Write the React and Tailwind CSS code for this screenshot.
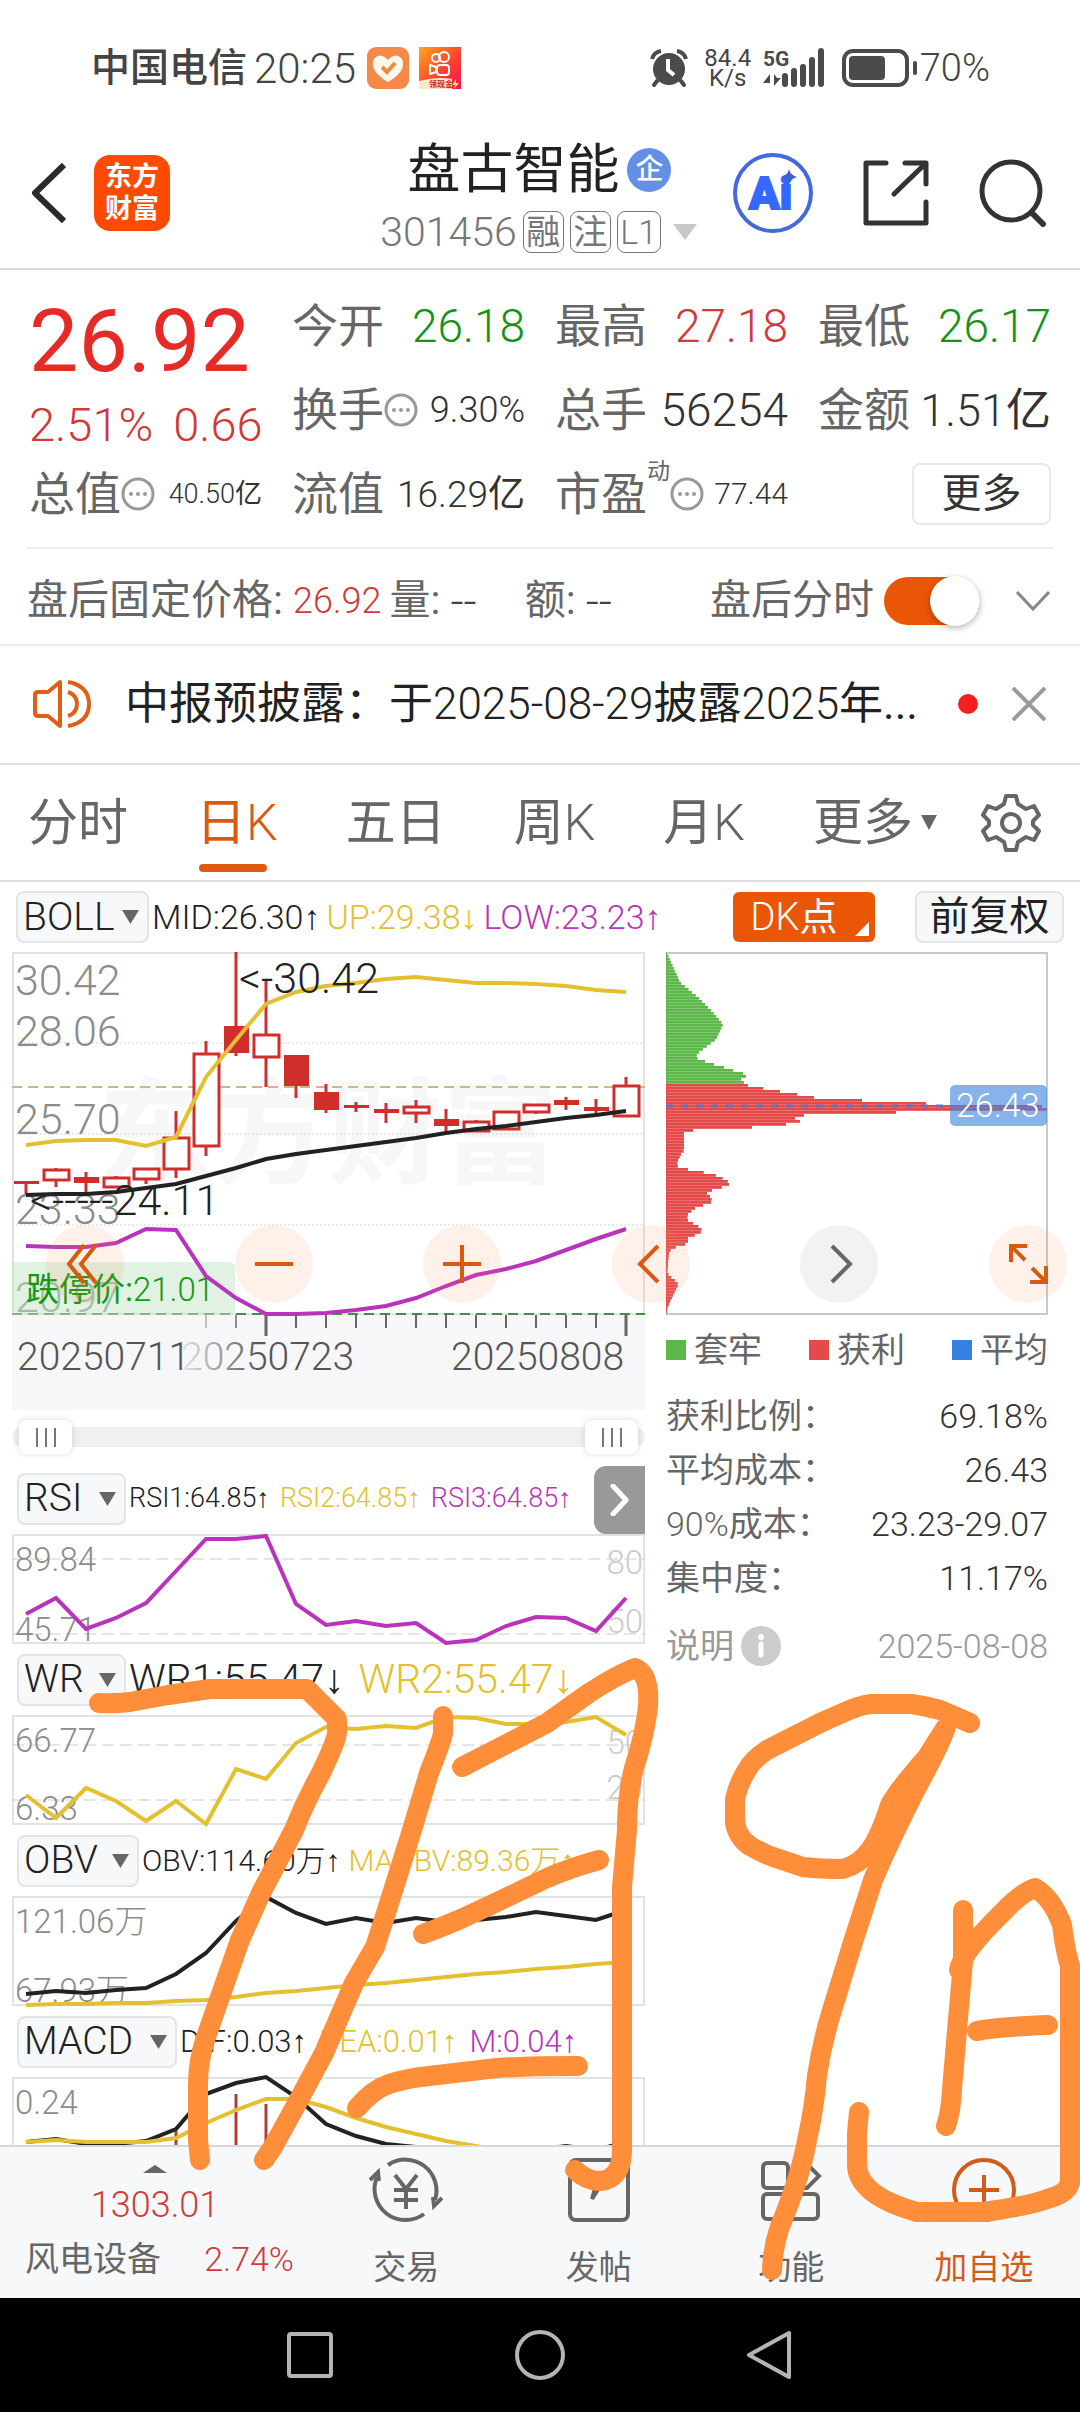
// App.jsx
import { useState } from 'react';

const STEP = 30;
const START = 14;
const UP = '#cf2e2c';
const GOLD = '#e3c02f';
const PURPLE = '#b933bb';
const INK = '#222222';

// high, top, bottom, low, filled
const CANDLES = [
  [229, 229, 232, 242, true],
  [216, 218, 228, 235, false],
  [220, 225, 231, 240, true],
  [224, 226, 235, 235, false],
  [216, 217, 227, 232, false],
  [159, 186, 217, 226, false],
  [89, 102, 194, 204, false],
  [0, 74, 101, 104, true],
  [27, 83, 105, 135, false],
  [103, 103, 134, 146, true],
  [132, 140, 158, 161, true],
  [150, 153, 156, 160, true],
  [151, 157, 161, 171, true],
  [148, 155, 161, 171, false],
  [157, 167, 174, 181, true],
  [168, 170, 179, 179, false],
  [160, 160, 177, 177, false],
  [152, 153, 160, 162, false],
  [145, 148, 153, 158, true],
  [147, 155, 159, 162, true],
  [125, 134, 164, 164, false],
];

const BOLL_UP = [193, 189, 188, 188, 194, 185, 125, 88, 52, 40, 34, 31, 27, 25, 28, 31, 31, 32, 34, 38, 40];
const BOLL_MID = [243, 242, 242, 240, 236, 232, 224, 216, 207, 202, 198, 194, 190, 186, 181, 177, 174, 170, 166, 163, 159];
const BOLL_LOW = [294, 295, 295, 291, 277, 278, 324, 346, 362, 362, 361, 358, 354, 346, 334, 323, 317, 309, 298, 287, 277];
const RSI = [80, 64, 95, 84, 69, 37, 5, 5, 2, 70, 91, 87, 92, 89, 109, 106, 92, 83, 84, 97, 64];
const WR = [80, 103, 73, 86, 106, 86, 109, 54, 64, 28, 12, 14, 11, 13, 2, 3, 9, 9, 7, 2, 20];
const OBV = [98, 95, 97, 94, 92, 78, 57, 25, 1, 17, 28, 22, 27, 22, 26, 24, 21, 16, 20, 24, 14];
const MAOBV = [109, 108, 108, 107, 107, 105, 104, 101, 97, 95, 92, 89, 87, 84, 81, 78, 76, 73, 71, 68, 66];
const DIF = [65, 62, 67, 67, 64, 52, 17, 6, 0, 20, 47, 59, 67, 70, 73, 74, 74, 73, 69, 73, 65];
const DEA = [65, 63, 65, 65, 65, 61, 46, 33, 22, 22, 30, 41, 50, 57, 64, 69, 74, 78, 80, 80, 80];
const MACD_BARS = [[1, 68], [5, 54], [6, 14], [7, 17], [8, 27], [18, 68]];

// chip distribution outline: y, width
const CHIPS = [
  [0, 1], [29, 14], [44, 32], [57, 45], [71, 57], [86, 50], [95, 38], [99, 33], [104, 29], [108, 39],
  [111, 48], [114, 58], [117, 67], [120, 77], [123, 80], [126, 75], [129, 78], [132, 82], [135, 97],
  [138, 114], [141, 131], [144, 148], [147, 196], [150, 260], [153, 376], [156, 381], [159, 230],
  [162, 138], [165, 129], [168, 134], [171, 120], [174, 86], [177, 27], [180, 18], [197, 18], [201, 15],
  [209, 11], [214, 12], [217, 27], [220, 43], [223, 53], [227, 60], [230, 65], [233, 59], [237, 46],
  [240, 41], [243, 44], [247, 46], [249, 45], [252, 37], [255, 29], [259, 24], [262, 21], [267, 22],
  [270, 27], [274, 34], [277, 36], [280, 34], [283, 26], [286, 20], [289, 23], [292, 17], [295, 6],
  [299, 3], [319, 1], [322, 3], [329, 11], [332, 12], [342, 7], [355, 1], [363, 0],
];

const widthAt = (y) => {
  const i = CHIPS.findIndex(([cy]) => cy >= y);
  if (i <= 0) return CHIPS[0][1];
  const [y0, w0] = CHIPS[i - 1];
  const [y1, w1] = CHIPS[i];
  return w0 + ((w1 - w0) * (y - y0)) / (y1 - y0);
};

const points = (list) => list.map((y, i) => `${START + i * STEP},${y}`).join(' ');

function Line({ data, color }) {
  return <polyline points={points(data)} fill="none" stroke={color} strokeWidth="4" />;
}

function Caret({ className = '', up = false }) {
  return (
    <svg viewBox="0 0 10 8" className={className} fill="currentColor" preserveAspectRatio="none" aria-hidden="true">
      <path d={up ? 'M0 8h10L5 0z' : 'M0 0h10L5 8z'} />
    </svg>
  );
}

function StatusBar() {
  return (
    <div className="flex h-[136px] items-center justify-between pl-[91px] pr-[90px] text-[#444]">
      <div className="flex items-center">
        <span className="text-[39px] font-medium">中国电信</span>
        <span className="ml-[7px] text-[42px] font-light">20:25</span>
        <svg viewBox="0 0 42 42" className="ml-[11px] h-[42px] w-[42px]" aria-hidden="true">
          <rect width="42" height="42" rx="9" fill="#f5894a" />
          <path d="M21 35C9 28 5 21 6 15c1-7 10-9 15-2 5-7 14-5 15 2 1 6-3 13-15 20z" fill="#fff8ee" />
          <path d="M15 20l5 5 8-9" fill="none" stroke="#f08a3c" strokeWidth="4" />
        </svg>
        <svg viewBox="0 0 42 42" className="ml-[10px] h-[42px] w-[42px]" aria-hidden="true">
          <defs>
            <linearGradient id="ks" x1="0" y1="0" x2="1" y2="1">
              <stop offset="0" stopColor="#ffa51f" />
              <stop offset=".6" stopColor="#fb3d2e" />
              <stop offset="1" stopColor="#f5135f" />
            </linearGradient>
          </defs>
          <rect width="42" height="42" fill="url(#ks)" />
          <g fill="none" stroke="#fff" strokeWidth="2">
            <circle cx="17" cy="11" r="4" />
            <circle cx="25" cy="10" r="5" />
            <rect x="18" y="18" width="12" height="10" rx="3" />
            <path d="M17 20l-6-2v9l6-2z" />
          </g>
          <path d="M0 34q18-5 33-2v10H0z" fill="#ffe7c9" />
          <text x="10" y="40" fontSize="8" fontWeight="700" fill="#c2261c">领现金</text>
          <path d="M37 32l-4 6h3l-1 4 5-6h-3z" fill="#ffe14a" />
        </svg>
      </div>
      <div className="flex items-center">
        <svg viewBox="0 0 38 38" className="h-[38px] w-[38px]" aria-hidden="true">
          <circle cx="19" cy="20" r="16" fill="#4b4b4b" />
          <path d="M2 10Q4 3 11 2M36 10Q34 3 27 2" fill="none" stroke="#4b4b4b" strokeWidth="4" />
          <path d="M7 32l-3 4M31 32l3 4" stroke="#4b4b4b" strokeWidth="4" strokeLinecap="round" />
          <path d="M18 10v11l6 5" fill="none" stroke="#fff" strokeWidth="4" />
        </svg>
        <div className="ml-[15px] flex w-[50px] flex-col items-center text-[24px] leading-[20px]">
          <span>84.4</span>
          <span>K/s</span>
        </div>
        <svg viewBox="0 0 64 40" className="ml-[10px] h-[40px] w-[64px] overflow-visible" aria-hidden="true">
          <text x="0" y="18" fontSize="21" fontWeight="700" fill="#4b4b4b">5G</text>
          <path d="M7 38V26l-7 9h7M11 26v12l7-8h-4" fill="#4b4b4b" />
          <path d="M22 36v-8M31 36V23M40 36V19M49 36V12M58 36V3" stroke="#4b4b4b" strokeWidth="6" strokeLinecap="round" />
        </svg>
        <svg viewBox="0 0 76 38" className="ml-[15px] h-[38px] w-[76px]" aria-hidden="true">
          <rect x="2" y="2" width="63" height="34" rx="9" fill="none" stroke="#4b4b4b" strokeWidth="4" />
          <rect x="7" y="7" width="36" height="24" rx="4" fill="#4b4b4b" />
          <path d="M73 14v10" stroke="#4b4b4b" strokeWidth="4" strokeLinecap="round" />
        </svg>
        <span className="ml-[2px] text-[38px] font-light leading-none">70%</span>
      </div>
    </div>
  );
}

function Header() {
  return (
    <header className="grid h-[134px] grid-cols-[1fr_auto_1fr] items-start border-b-2 border-[#d9d9d9] pl-[30px] pr-[33px]">
      <div className="flex h-[114px] items-center gap-[28px]">
        <button type="button" aria-label="返回">
          <svg viewBox="0 0 36 62" className="h-[62px] w-[36px]" fill="none" stroke="#2b2b2b" strokeWidth="6">
            <path d="M34 3L5 31l29 28" strokeLinejoin="round" />
          </svg>
        </button>
        <div className="flex h-[76px] w-[76px] flex-col items-center justify-center rounded-[16px] bg-[#ff4a02] text-[27px] font-bold leading-[32px] text-white">
          <span>东方</span>
          <span>财富</span>
        </div>
      </div>
      <div className="flex flex-col items-center">
        <h1 className="flex h-[64px] items-center gap-[8px] pl-[2px] pt-[4px] text-[53px] font-normal leading-none text-[#222]">
          盘古智能
          <span className="flex h-[44px] w-[44px] items-center justify-center rounded-full bg-[#648fe6] text-[28px] font-medium text-white">企</span>
        </h1>
        <div className="flex h-[62px] items-center gap-[6px] pt-[2px] text-[41px] font-light leading-none text-[#777]">
          301456
          <span className="flex h-[42px] w-[41px] items-center justify-center rounded-[8px] border border-[#777] text-[34px] font-normal">融</span>
          <span className="flex h-[42px] w-[41px] items-center justify-center rounded-[8px] border border-[#777] text-[34px] font-normal">注</span>
          <span className="flex h-[42px] w-[44px] items-center justify-center rounded-[8px] border border-[#777] text-[34px]">L1</span>
          <Caret className="ml-[6px] h-[16px] w-[24px] text-[#c8c8c8]" />
        </div>
      </div>
      <div className="flex h-[114px] items-center justify-end gap-[50px]">
        <button type="button" aria-label="AI">
          <svg viewBox="0 0 80 80" className="h-[80px] w-[80px]">
            <circle cx="40" cy="40" r="38" fill="none" stroke="#4468dd" strokeWidth="4" />
            <text x="16" y="56" fontSize="45" fontWeight="900" fill="#3468ff" stroke="#3468ff" strokeWidth="2">Ai</text>
            <path d="M56 16q1 6 8 8-7 2-8 8-1-6-8-8 7-2 8-8z" fill="#3d5fd8" />
          </svg>
        </button>
        <button type="button" aria-label="分享">
          <svg viewBox="0 0 66 66" className="h-[66px] w-[66px]" fill="none" stroke="#333" strokeWidth="5">
            <path d="M23 3H3v60h60V42" strokeLinejoin="round" strokeLinecap="round" />
            <path d="M42 3h21v21M62 4L31 34" strokeLinejoin="round" strokeLinecap="round" />
          </svg>
        </button>
        <button type="button" aria-label="搜索">
          <svg viewBox="0 0 68 68" className="h-[68px] w-[68px]" fill="none" stroke="#333" strokeWidth="5">
            <circle cx="32" cy="32" r="29" />
            <path d="M53 54l11 11" strokeWidth="6" strokeLinecap="round" />
          </svg>
        </button>
      </div>
    </header>
  );
}

function Dots() {
  return (
    <svg viewBox="0 0 34 34" className="h-[34px] w-[34px] shrink-0" aria-hidden="true">
      <circle cx="17" cy="17" r="15" fill="none" stroke="#999" strokeWidth="3" />
      <g fill="#999">
        <circle cx="10" cy="17" r="2" />
        <circle cx="17" cy="17" r="2" />
        <circle cx="24" cy="17" r="2" />
      </g>
    </svg>
  );
}

function Stat({ label, value, className, dots, sup }) {
  return (
    <div className="flex h-[84px] items-center justify-between whitespace-nowrap">
      <span className="flex items-center text-[46px] text-[#666]">
        {label}
        {sup && <sup className="-top-[22px] text-[23px]">{sup}</sup>}
        {dots && <Dots />}
      </span>
      <span className={className}>{value}</span>
    </div>
  );
}

function Quote() {
  return (
    <section className="mx-[27px] grid grid-cols-4 gap-x-[30px] border-b-2 border-[#ececec] px-[2px] pb-[11px] pt-[14px] leading-none">
      <div className="row-span-2 whitespace-nowrap">
        <div className="flex h-[114px] items-center text-[88px] text-[#e52a28]">26.92</div>
        <div className="flex h-[52px] items-center gap-[20px] text-[47px] font-light text-[#d03a3a]">
          <span>2.51%</span>
          <span>0.66</span>
        </div>
      </div>
      <Stat label="今开" value="26.18" className="text-[46px] font-light text-[#149314]" />
      <Stat label="最高" value="27.18" className="text-[46px] font-light text-[#d03a3a]" />
      <Stat label="最低" value="26.17" className="text-[46px] font-light text-[#149314]" />
      <Stat label="换手" dots value="9.30%" className="text-[36px] font-light text-[#333]" />
      <Stat label="总手" value="56254" className="text-[46px] font-light text-[#333]" />
      <Stat label="金额" value={<>1.51<span className="font-normal">亿</span></>} className="text-[45px] font-light text-[#333]" />
      <Stat label="总值" dots value={<>40.50<span className="font-normal">亿</span></>} className="text-[27px] font-light text-[#333]" />
      <Stat label="流值" value={<>16.29<span className="font-normal">亿</span></>} className="text-[37px] font-light text-[#333]" />
      <Stat label="市盈" sup="动" dots value="77.44" className="text-[30px] font-light text-[#333]" />
      <div className="flex h-[84px] items-center justify-end">
        <button type="button" className="h-[62px] w-[139px] rounded-[8px] border-2 border-[#e8e8e8] text-[40px] text-[#333]">更多</button>
      </div>
    </section>
  );
}

function AfterHours() {
  const [on, setOn] = useState(true);
  return (
    <section className="flex h-[97px] items-center border-b-2 border-[#ececec] pl-[27px] pr-[30px] pt-[8px] text-[41px] leading-none text-[#666]">
      <span>盘后固定价格:</span>
      <span className="ml-[10px] text-[36px] font-light text-[#d03a3a]">26.92</span>
      <span className="ml-[8px]">量:</span>
      <span className="ml-[10px] text-[46px] font-light text-[#444]">--</span>
      <span className="ml-[48px]">额:</span>
      <span className="ml-[10px] text-[46px] font-light text-[#444]">--</span>
      <label className="ml-auto flex items-center gap-[10px]">
        盘后分时
        <input
          type="checkbox"
          role="switch"
          checked={on}
          onChange={() => setOn(!on)}
          className="flex h-[48px] w-[96px] appearance-none items-center justify-start rounded-full bg-[#ccc] before:h-[50px] before:w-[50px] before:rounded-full before:bg-white before:shadow-[0_2px_6px_rgba(0,0,0,0.3)] checked:justify-end checked:bg-[#e95605]"
        />
      </label>
      <button type="button" aria-label="展开" className="ml-[36px]">
        <svg viewBox="0 0 34 20" className="h-[20px] w-[34px]" fill="none" stroke="#888" strokeWidth="3">
          <path d="M1 1l16 17L33 1" />
        </svg>
      </button>
    </section>
  );
}

function Notice() {
  return (
    <section className="flex h-[119px] items-center border-b-2 border-[#dedede] pb-[2px] pl-[33px] pr-[34px]">
      <svg viewBox="0 0 60 50" className="h-[50px] w-[60px] shrink-0" fill="none" stroke="#df5f14" strokeWidth="4" aria-hidden="true">
        <path d="M27 3v44L15 37H5q-3 0-3-3V16q0-3 3-3h10z" strokeLinejoin="round" />
        <path d="M35 13q9 3 9 12t-9 12M35 3q21 4 21 22T35 47" />
      </svg>
      <a href="#notice" className="ml-[32px] truncate text-[44px] leading-[60px] text-[#222]">
        中报预披露：于<span className="font-light">2025-08-29</span>披露<span className="font-light">2025</span>年...
      </a>
      <span className="ml-auto h-[20px] w-[20px] shrink-0 rounded-full bg-[#f42020]" />
      <button type="button" aria-label="关闭" className="ml-[34px] shrink-0">
        <svg viewBox="0 0 34 34" className="h-[34px] w-[34px]" stroke="#999" strokeWidth="4">
          <path d="M1 1l32 32M33 1L1 33" />
        </svg>
      </button>
    </section>
  );
}

function Tabs() {
  const [active, setActive] = useState('日K');
  return (
    <nav className="flex h-[117px] items-center border-b-2 border-[#dedede] pl-[28px] pr-[39px] text-[50px] leading-none text-[#666]">
      <div className="flex h-full flex-1 justify-between">
        {['分时', '日K', '五日', '周K', '月K'].map((tab) => (
          <button
            key={tab}
            type="button"
            onClick={() => setActive(tab)}
            className={tab === active ? 'relative text-[#dc5a10]' : 'relative'}
          >
            {tab.replace('K', '')}
            {tab.endsWith('K') && <span className="font-light">K</span>}
            {tab === active && <span className="absolute bottom-[8px] left-[3px] h-[8px] w-[68px] rounded-full bg-[#e05a12]" />}
          </button>
        ))}
        <button type="button" className="flex items-center gap-[8px]">
          更多
          <Caret className="h-[15px] w-[16px]" />
        </button>
      </div>
      <button type="button" aria-label="设置" className="ml-[44px]">
        <svg viewBox="0 0 60 60" className="h-[60px] w-[60px]" fill="none" stroke="#666" strokeWidth="4" strokeLinejoin="round">
          <path d="M25 3h10l2 8 8 5 8-3 5 9-6 6v4l6 6-5 9-8-3-8 5-2 8H25l-2-8-8-5-8 3-5-9 6-6v-4l-6-6 5-9 8 3 8-5z" />
          <circle cx="30" cy="30" r="9" />
        </svg>
      </button>
    </nav>
  );
}

function IndicatorSelect({ name, className }) {
  return (
    <span className={`relative inline-flex h-[52px] shrink-0 items-center rounded-[8px] border-2 border-[#e3e4e6] bg-[#f7f8fa] ${className}`}>
      <select aria-label="指标" defaultValue={name} className="h-full w-full appearance-none bg-transparent pl-[5px] text-[39px] font-light leading-none text-[#222]">
        <option>{name}</option>
      </select>
      <Caret className="pointer-events-none absolute right-[8px] h-[14px] w-[17px] text-[#666]" />
    </span>
  );
}

function MainLegend() {
  return (
    <div className="flex h-[70px] items-center pl-[16px] pr-[16px] leading-none">
      <IndicatorSelect name="BOLL" className="w-[133px]" />
      <div className="ml-[3px] flex gap-[6px] whitespace-nowrap text-[34px] font-light">
        <span className="text-[#222]">MID:26.30↑</span>
        <span className="text-[#e3c02f]">UP:29.38↓</span>
        <span className="text-[#b933bb]">LOW:23.23↑</span>
      </div>
      <button type="button" className="relative ml-auto h-[50px] w-[142px] shrink-0 rounded-[6px] bg-[#e95605] pr-[20px] text-[38px] text-white">
        <span className="font-light">DK</span>点
        <svg viewBox="0 0 14 14" className="absolute bottom-[6px] right-[6px] h-[14px] w-[14px]" fill="#fff" aria-hidden="true">
          <path d="M14 0v14H0z" />
        </svg>
      </button>
      <button type="button" className="ml-[40px] h-[52px] w-[149px] shrink-0 rounded-[8px] border-2 border-[#e3e4e6] bg-[#f7f8fa] text-[40px] text-[#222]">前复权</button>
    </div>
  );
}

function KChart() {
  return (
    <svg viewBox="0 0 633 363" className="block w-full overflow-visible">
      <text x="86" y="222" fontSize="115" fontWeight="700" fill="#f7f7f7">东方财富</text>
      <rect x="1" y="1" width="631" height="361" fill="none" stroke="#e2e2e2" strokeWidth="2" />
      <path d="M0 91h633M0 182h633M0 273h633" stroke="#d5d5d5" strokeWidth="1" strokeDasharray="2 2" />
      <path d="M0 135h633" stroke="#d0b48c" strokeWidth="2" strokeDasharray="10 6" />
      <g fontSize="43" fontWeight="300" fill="#8c8c8c">
        <text x="3" y="43">30.42</text>
        <text x="3" y="94">28.06</text>
        <text x="3" y="182">25.70</text>
        <text x="3" y="272">23.33</text>
        <text x="3" y="360">20.97</text>
      </g>
      {CANDLES.map(([high, top, bottom, low, filled], i) => {
        const x = START + i * STEP;
        return (
          <g key={i} stroke={UP} strokeWidth="3">
            <path d={`M${x} ${high}V${top}M${x} ${bottom}V${low}`} />
            <rect x={x - 12} y={top} width="25" height={bottom - top} fill={filled ? UP : '#fff'} strokeWidth={filled ? 0 : 3} />
          </g>
        );
      })}
      <Line data={BOLL_UP} color={GOLD} />
      <Line data={BOLL_MID} color={INK} />
      <g fontSize="43" fontWeight="300" fill={INK}>
        <text x="227" y="41">&lt;-30.42</text>
        <text x="18" y="263">&lt;-----24.11</text>
      </g>
      <path d="M0 362h633" stroke="#3f9142" strokeWidth="2" strokeDasharray="10 6" />
      <path d="M0 310h217q6 0 6 6v47H0z" fill="#c3e6c6" fillOpacity=".5" />
      <text x="14" y="349" fontSize="33" fill="#119a11">
        跌停价:<tspan fontWeight="300">21.01</tspan>
      </text>
      <Line data={BOLL_LOW} color={PURPLE} />
    </svg>
  );
}

function DateAxis() {
  return (
    <svg viewBox="0 0 633 95" className="block w-full bg-[#f7f7fa]">
      <defs>
        <linearGradient id="fade">
          <stop offset="0" stopColor="#f7f7fa" />
          <stop offset="1" stopColor="#f7f7fa" stopOpacity="0" />
        </linearGradient>
      </defs>
      {Array.from({ length: 15 }).map((_, i) => {
        const major = i === 2 || i === 14;
        return <path key={i} d={`M${START + (i + 6) * STEP} 0v${major ? 21 : 13}`} stroke="#666" strokeWidth={major ? 3 : 2} />;
      })}
      <g fontSize="39" fontWeight="300" fill="#555">
        <text x="169" y="55">20250723</text>
        <rect x="160" y="0" width="88" height="95" fill="url(#fade)" />
        <text x="5" y="55">20250711</text>
        <text x="439" y="55">20250808</text>
      </g>
    </svg>
  );
}

const RANGE =
  'pointer-events-none absolute inset-x-[7px] top-0 h-[34px] appearance-none bg-transparent [&::-webkit-slider-thumb]:pointer-events-auto [&::-webkit-slider-thumb]:h-[34px] [&::-webkit-slider-thumb]:w-[53px] [&::-webkit-slider-thumb]:appearance-none [&::-webkit-slider-thumb]:rounded-[8px] [&::-webkit-slider-thumb]:shadow-[0_0_6px_rgba(0,0,0,0.15)] [&::-webkit-slider-thumb]:[background:linear-gradient(#777,#777)_17px_center/2px_19px_no-repeat,linear-gradient(#777,#777)_26px_center/2px_19px_no-repeat,linear-gradient(#777,#777)_35px_center/2px_19px_no-repeat,#fff]';

function RangeSlider() {
  return (
    <div className="relative mt-[10px] flex h-[34px] items-center">
      <div className="h-[20px] w-full rounded-full bg-[#f0f0f3]" />
      <input type="range" aria-label="开始日期" defaultValue="0" className={RANGE} />
      <input type="range" aria-label="结束日期" defaultValue="100" className={RANGE} />
    </div>
  );
}

function Panel({ name, box, legend, size, labels, right = [], dashes = [], arrow, children }) {
  return (
    <div>
      <div className="relative flex h-[71px] items-center pl-[5px] leading-none">
        <IndicatorSelect name={name} className={box} />
        <div className={`ml-[3px] flex whitespace-nowrap font-light ${size}`}>
          {legend.map(([text, color]) => (
            <span key={text} className={color}>{text}</span>
          ))}
        </div>
        {arrow && (
          <button type="button" aria-label="更多指标" className="absolute bottom-0 right-0 flex h-[68px] w-[51px] items-center justify-center rounded-l-[12px] bg-[#999]">
            <svg viewBox="0 0 20 32" className="h-[32px] w-[20px]" fill="none" stroke="#fff" strokeWidth="5">
              <path d="M3 2l13 14L3 30" strokeLinecap="round" strokeLinejoin="round" />
            </svg>
          </button>
        )}
      </div>
      <svg viewBox="0 0 633 110" className="block w-full overflow-visible">
        <rect x="1" y="1" width="631" height="108" fill="none" stroke="#e2e2e2" strokeWidth="2" />
        {dashes.map((y) => (
          <path key={y} d={`M0 ${y}h633`} stroke="#ccc" strokeWidth="1" strokeDasharray="12 6" />
        ))}
        <g fontSize="33" fontWeight="300" fill="#8c8c8c">
          {labels.map(([text, y]) => <text key={text} x="3" y={y}>{text}</text>)}
        </g>
        <g fontSize="33" fontWeight="300" fill="#ccc" textAnchor="end">
          {right.map(([text, y]) => <text key={text} x="631" y={y}>{text}</text>)}
        </g>
        {children}
      </svg>
    </div>
  );
}

function Panels() {
  return (
    <>
      <Panel
        name="RSI"
        box="w-[109px]"
        size="gap-[10px] text-[27px]"
        legend={[['RSI1:64.85↑', 'text-[#222]'], ['RSI2:64.85↑', 'text-[#e3c02f]'], ['RSI3:64.85↑', 'text-[#b933bb]']]}
        labels={[['89.84', 37], ['45.71', 107]]}
        right={[['80', 40], ['50', 99]]}
        dashes={[25, 100]}
        arrow
      >
        <Line data={RSI} color={PURPLE} />
      </Panel>
      <Panel
        name="WR"
        box="w-[109px]"
        size="gap-[14px] text-[41px]"
        legend={[['WR1:55.47↓', 'text-[#222]'], ['WR2:55.47↓', 'text-[#e3c02f]']]}
        labels={[['66.77', 37], ['6.33', 105]]}
        right={[['50', 39], ['20', 84]]}
        dashes={[30, 85]}
      >
        <Line data={WR} color={GOLD} />
      </Panel>
      <Panel
        name="OBV"
        box="w-[122px]"
        size="gap-[8px] text-[30px]"
        legend={[['OBV:114.60万↑', 'text-[#222]'], ['MAOBV:89.36万↑', 'text-[#e3c02f]']]}
        labels={[['121.06万', 37], ['67.93万', 106]]}
      >
        <Line data={OBV} color={INK} />
        <Line data={MAOBV} color={GOLD} />
      </Panel>
      <Panel
        name="MACD"
        box="w-[160px]"
        size="gap-[12px] text-[31px]"
        legend={[['DIF:0.03↑', 'text-[#222]'], ['DEA:0.01↑', 'text-[#e3c02f]'], ['M:0.04↑', 'text-[#b933bb]']]}
        labels={[['0.24', 37]]}
      >
        {MACD_BARS.map(([i, y]) => (
          <path key={i} d={`M${START + i * STEP} ${y}V80`} stroke="#b33a38" strokeWidth="3" />
        ))}
        <Line data={DIF} color={INK} />
        <Line data={DEA} color={GOLD} />
      </Panel>
    </>
  );
}

function ChipChart() {
  return (
    <svg viewBox="0 0 382 363" className="block w-full">
      <rect x="1" y="1" width="380" height="361" fill="none" stroke="#c9c9c9" strokeWidth="2" />
      {Array.from({ length: 121 }).map((_, i) => {
        const y = i * 3;
        const w = widthAt(y);
        const color = y < 132 ? '#5cb848' : '#e54a4a';
        return (
          <g key={i} fill={color}>
            <rect x="0" y={y} width={w} height="3" fillOpacity=".8" />
            <rect x="0" y={y} width={w} height="2" />
          </g>
        );
      })}
      <path d="M0 154h284" stroke="#6a6fb8" strokeWidth="3" strokeDasharray="7 8" />
      <rect x="284" y="133" width="97" height="41" rx="5" fill="#3d85df" fillOpacity=".62" />
      <text x="290" y="165" fontSize="34" fontWeight="300" fill="#fff">26.43</text>
    </svg>
  );
}

function ChipPanel() {
  const rows = [
    ['获利比例：', '69.18%'],
    ['平均成本：', '26.43'],
    [<><span className="font-light">90%</span>成本：</>, '23.23-29.07'],
    ['集中度：', '11.17%'],
  ];
  return (
    <div className="text-[34px] leading-none text-[#666]">
      <ChipChart />
      <div className="flex h-[70px] items-center justify-between">
        <span className="flex items-center gap-[8px]"><i className="h-[20px] w-[20px] bg-[#5cb848]" />套牢</span>
        <span className="flex items-center gap-[8px]"><i className="h-[20px] w-[20px] bg-[#e54a4a]" />获利</span>
        <span className="flex items-center gap-[8px]"><i className="h-[20px] w-[20px] bg-[#3580e0]" />平均</span>
      </div>
      <dl className="mt-[4px]">
        {rows.map(([label, value]) => (
          <div key={value} className="flex h-[54px] items-center justify-between">
            <dt>{label}</dt>
            <dd className="font-light text-[#333]">{value}</dd>
          </div>
        ))}
      </dl>
      <div className="mt-[14px] flex h-[54px] items-center justify-between text-[#999]">
        <span className="flex items-center gap-[7px]">
          说明
          <svg viewBox="0 0 40 40" className="h-[40px] w-[40px]" aria-hidden="true">
            <circle cx="20" cy="20" r="20" fill="#ccc" />
            <path d="M20 18v11" stroke="#fff" strokeWidth="5" strokeLinecap="round" />
            <circle cx="20" cy="11" r="3" fill="#fff" />
          </svg>
        </span>
        <span className="font-light">2025-08-08</span>
      </div>
    </div>
  );
}

function ChartControls() {
  const items = [
    ['最早', 'bg-[#fb8c52]/12 text-[#d9590f]', 'M38 20L23 39l15 19M50 20L35 39l15 19'],
    ['缩小', 'bg-[#fb8c52]/12 text-[#d9590f]', 'M20 39h38'],
    ['放大', 'bg-[#fb8c52]/12 text-[#d9590f]', 'M20 39h38M39 20v38'],
    ['向左', 'bg-[#fb8c52]/12 text-[#d9590f]', 'M46 21L28 39l18 18'],
    ['向右', 'bg-black/5 text-[#666]', 'M32 21l18 18-18 18'],
    ['全屏', 'bg-[#fb8c52]/12 text-[#d9590f]', 'M22 37V21h16M22 21l14 14M57 41v16H41M57 57L43 43'],
  ];
  return (
    <div className="absolute left-[46px] right-[13px] top-[273px] flex justify-between">
      {items.map(([label, tone, d]) => (
        <button key={label} type="button" aria-label={label} className={`h-[78px] w-[78px] rounded-full ${tone}`}>
          <svg viewBox="0 0 78 78" className="h-full w-full" fill="none" stroke="currentColor" strokeWidth="4">
            <path d={d} />
          </svg>
        </button>
      ))}
    </div>
  );
}

function BottomBar() {
  return (
    <footer className="relative flex h-[153px] shrink-0 border-t-2 border-[#d5d8da] bg-[#f7f8fa] leading-none text-[#666]">
      <button type="button" className="w-[310px] shrink-0">
        <Caret up className="mx-auto h-[8px] w-[24px]" />
        <span className="flex h-[64px] items-center justify-center text-[36px] font-light text-[#d03a3a]">1303.01</span>
        <span className="flex h-[44px] items-center justify-between pl-[25px] pr-[16px] text-[34px]">
          风电设备
          <span className="font-light text-[#d03a3a]">2.74%</span>
        </span>
      </button>
      <div className="grid flex-1 grid-cols-4 text-[33px]">
        <button type="button" className="flex flex-col items-center gap-[28px] pt-[10px]">
          <svg viewBox="0 0 74 66" className="h-[66px] w-[74px]" fill="none" stroke="#666" strokeWidth="4">
            <path d="M19 8a31 31 0 0 1 47 35M55 57A31 31 0 0 1 8 20" />
            <path d="M73 41l-8 8-1-9M1 23l8-8 1 9M26 18l11 14 11-14M37 32v20M25 33h24M25 43h24" />
          </svg>
          交易
        </button>
        <button type="button" className="flex flex-col items-center gap-[28px] pt-[10px]">
          <svg viewBox="0 0 64 66" className="h-[66px] w-[64px]" fill="none" stroke="#666" strokeWidth="4">
            <rect x="3" y="3" width="58" height="60" rx="6" />
            <path d="M39 20L25 42l4-14z" fill="#666" />
          </svg>
          发帖
        </button>
        <button type="button" className="flex flex-col items-center gap-[28px] pt-[10px]">
          <svg viewBox="0 0 62 66" className="h-[66px] w-[62px]" fill="none" stroke="#666" strokeWidth="4">
            <rect x="3" y="6" width="25" height="25" rx="4" />
            <path d="M34 10q0-4 4-4h8l13 13-12 12h-9q-4 0-4-4z" />
            <rect x="3" y="37" width="55" height="25" rx="4" />
          </svg>
          功能
        </button>
        <button type="button" className="flex flex-col items-center gap-[28px] pt-[10px] text-[#d05c1c]">
          <svg viewBox="0 0 66 66" className="h-[66px] w-[66px]" fill="none" stroke="currentColor" strokeWidth="4">
            <circle cx="33" cy="33" r="30" />
            <path d="M18 33h30M33 18v30" />
          </svg>
          加自选
        </button>
      </div>
    </footer>
  );
}

function SystemNav() {
  return (
    <div className="grid h-[114px] shrink-0 grid-cols-3 place-items-center bg-black px-[195px]">
      <button type="button" aria-label="最近任务">
        <svg viewBox="0 0 50 50" className="h-[50px] w-[50px]" fill="none" stroke="#b4b4b4" strokeWidth="4">
          <rect x="4" y="4" width="42" height="42" rx="2" />
        </svg>
      </button>
      <button type="button" aria-label="主页">
        <svg viewBox="0 0 50 50" className="h-[50px] w-[50px]" fill="none" stroke="#b4b4b4" strokeWidth="4">
          <circle cx="25" cy="25" r="23" />
        </svg>
      </button>
      <button type="button" aria-label="后退">
        <svg viewBox="0 0 50 50" className="h-[50px] w-[50px]" fill="none" stroke="#b4b4b4" strokeWidth="4">
          <path d="M44 3v44L4 25z" strokeLinejoin="round" />
        </svg>
      </button>
    </div>
  );
}

// finger-drawn note over the screen
const STROKES = [
  'M99 1703Q112 1704 130 1702L168 1695 210 1689H307L337 1719V1733Q336 1742 320 1775Q305 1802 294 1830L261 1893 240 1940 219 2000 205 2040Q198 2062 198 2085V2140L200 2160',
  'M443 1716V1733Q442 1740 429 1773L412 1830 387 1910 375 1947 354 1983 324 2053 295 2107 273 2147 264 2160',
  'M462 1767L547 1723 589 1693Q615 1676 635 1668Q650 1674 648 1705Q646 1730 634 1768Q627 1795 627 1830L622 1887V2150Q622 2174 606 2180Q590 2184 575 2170',
  'M423 1934Q440 1928 463 1918L497 1902 547 1878Q570 1868 599 1860',
  'M357 2108Q372 2090 389 2084Q408 2078 429 2076L497 2068Q530 2066 578 2066',
  'M970 1723L940 1710Q925 1706 912 1704H870Q858 1706 847 1711L820 1723 767 1750Q752 1760 747 1770Q739 1782 735 1799V1823Q738 1838 750 1846Q760 1852 773 1857L803 1867Q820 1869 843 1869Q860 1864 870 1850Q880 1836 890 1805Q898 1790 927 1757L946 1727Q940 1745 917 1787Q890 1840 873 1880L853 1942 833 2007Q822 2042 817 2076Q814 2110 807 2140Q802 2170 785 2214Q773 2240 772 2270',
  'M963 1910V1962L958 2019 952 2089Q951 2112 946 2126',
  'M959 1970Q962 1952 1003 1912Q1022 1892 1035 1888Q1052 1898 1062 1925Q1065 1950 1070 1966V2182Q1068 2193 1050 2198Q1030 2206 983 2212H917Q885 2203 870 2190Q857 2178 857 2165V2133L859 2112',
  'M977 2031Q995 2027 1048 2025',
];

function Scribble() {
  return (
    <svg viewBox="0 0 1080 2412" className="pointer-events-none absolute inset-x-0 top-0 w-full" fill="none" stroke="#ff8e3a" strokeWidth="20" strokeLinecap="round" strokeLinejoin="round" aria-hidden="true">
      {STROKES.map((d) => <path key={d} d={d} />)}
    </svg>
  );
}

export default function App() {
  return (
    <div className="relative flex h-screen flex-col overflow-hidden bg-white font-[Roboto,'Liberation_Sans','Noto_Sans_CJK_SC',sans-serif]">
      <StatusBar />
      <Header />
      <Quote />
      <AfterHours />
      <Notice />
      <Tabs />
      <main className="min-h-0 flex-1 overflow-hidden">
        <MainLegend />
        <div className="relative grid grid-cols-[633fr_382fr] gap-[21px] pl-[12px] pr-[32px]">
          <div>
            <KChart />
            <DateAxis />
            <RangeSlider />
            <div className="mt-[9px]">
              <Panels />
            </div>
          </div>
          <ChipPanel />
          <ChartControls />
        </div>
      </main>
      <BottomBar />
      <SystemNav />
      <Scribble />
    </div>
  );
}
